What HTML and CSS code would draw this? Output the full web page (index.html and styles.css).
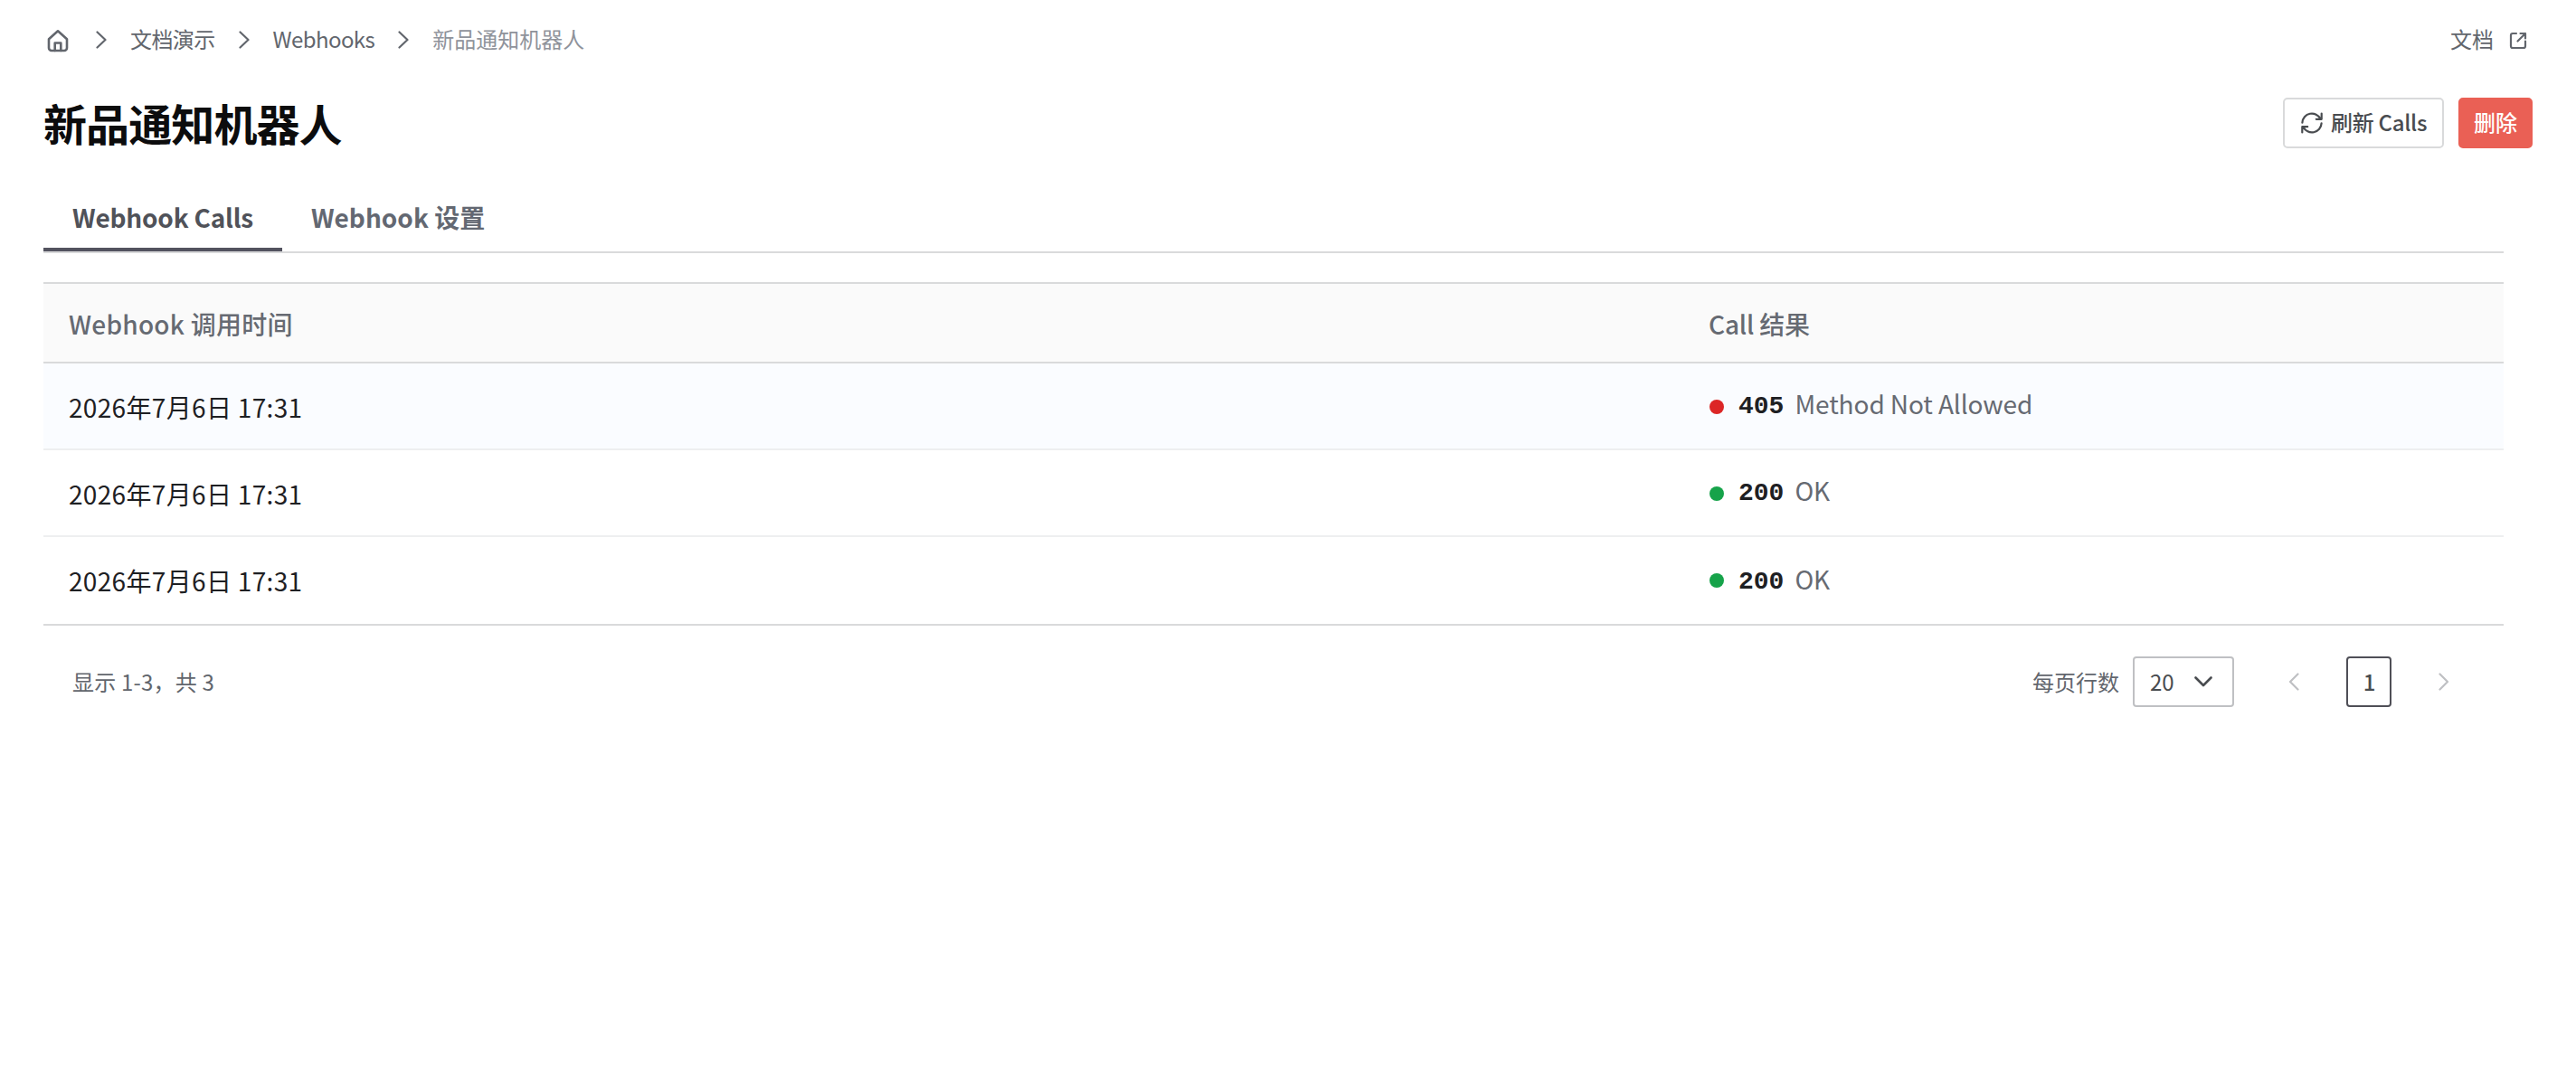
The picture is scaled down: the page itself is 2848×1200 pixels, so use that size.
FILE: index.html
```html
<!DOCTYPE html>
<html lang="zh-CN">
<head>
<meta charset="utf-8">
<title>新品通知机器人</title>
<link rel="stylesheet" href="styles.css">
</head>
<body>
<header class="topbar">
  <nav class="crumbs">
    <svg class="icon home" viewBox="0 0 28 28"><path d="M4 12.300 14 3.300l10 9V22a3 3 0 0 1-3 3H7a3 3 0 0 1-3-3z"/><path d="M10.700 25v-8.500h6.600V25"/></svg>
    <svg class="icon sep" viewBox="0 0 12 20"><path d="M1.500 1.500 10.500 10l-9 8.500"/></svg>
    <a class="crumb">文档演示</a>
    <svg class="icon sep" viewBox="0 0 12 20"><path d="M1.500 1.500 10.500 10l-9 8.500"/></svg>
    <a class="crumb">Webhooks</a>
    <svg class="icon sep" viewBox="0 0 12 20"><path d="M1.500 1.500 10.500 10l-9 8.500"/></svg>
    <span class="crumb current">新品通知机器人</span>
  </nav>
  <a class="docs"><span class="docs-label">文档</span>
    <svg class="icon external" viewBox="0 0 20 20"><path d="M8 2H4a2 2 0 0 0-2 2v12a2 2 0 0 0 2 2h12a2 2 0 0 0 2-2v-5.500"/><path d="M12.500 2H18v5.500M18 2l-8.500 8.500"/></svg>
  </a>
</header>
<div class="heading">
  <h1 class="title">新品通知机器人</h1>
  <div class="actions">
    <button class="btn refresh">
      <svg class="icon reload" viewBox="0 0 24 24"><path d="M1.400 11.600A10.600 10.600 0 0 1 21.500 7.500M22.700 1.500v6.300h-5.900M22.600 12.400A10.600 10.600 0 0 1 2.500 16.500M1.300 22.500v-6.300h5.900"/></svg>
      <span class="btn-label">刷新 Calls</span>
    </button>
    <button class="btn danger"><span class="btn-label">删除</span></button>
  </div>
</div>
<main class="content">
  <div class="tabs">
    <div class="tab active">Webhook Calls</div>
    <div class="tab">Webhook 设置</div>
  </div>
  <div class="table">
    <div class="row head">
      <div class="cell time">Webhook 调用时间</div>
      <div class="cell outcome">Call 结果</div>
    </div>
    <div class="row hover">
      <div class="cell time">2026年7月6日 17:31</div>
      <div class="cell"><i class="dot bad"></i><b class="code">405</b><span class="reason">Method Not Allowed</span></div>
    </div>
    <div class="row">
      <div class="cell time">2026年7月6日 17:31</div>
      <div class="cell"><i class="dot"></i><b class="code">200</b><span class="reason">OK</span></div>
    </div>
    <div class="row last">
      <div class="cell time">2026年7月6日 17:31</div>
      <div class="cell"><i class="dot"></i><b class="code">200</b><span class="reason">OK</span></div>
    </div>
  </div>
  <footer class="pager">
    <span class="summary">显示 1-3，共 3</span>
    <div class="controls">
      <span class="label">每页行数</span>
      <div class="select"><span class="num">20</span><svg class="icon caret" viewBox="0 0 20 12"><path d="M1.500 1.500 10 10l8.500-8.500"/></svg></div>
      <svg class="icon arrow prev" viewBox="0 0 12 20"><path d="M10.500 1.500 2 10l8.500 8.500"/></svg>
      <div class="page"><span class="num">1</span></div>
      <svg class="icon arrow" viewBox="0 0 12 20"><path d="M1.500 1.500 10 10l-8.500 8.500"/></svg>
    </div>
  </footer>
</main>
</body>
</html>
```
FILE: styles.css
```css
* { box-sizing: border-box; }
body {
  margin: 0;
  padding: 0 48px;
  background: #fff;
  color: #1e2023;
  font-family: "Noto Sans CJK SC", sans-serif;
  font-size: 28px;
  line-height: 40px;
}
.icon { display: block; flex: none; fill: none; stroke: currentColor; stroke-width: 2.2; stroke-linecap: round; stroke-linejoin: round; }
.topbar, .crumbs, .docs, .heading, .actions, .btn { display: flex; align-items: center; }

.topbar { height: 88px; justify-content: space-between; font-size: 24px; color: #62666d; }
.home { width: 28px; height: 28px; margin: 2px 2px 0; stroke-width: 2.6; }
.crumb { letter-spacing: -0.6px; padding-bottom: 2px; }
.sep { width: 12px; height: 20px; margin: 0 26px; }
.current { color: #8f939b; letter-spacing: 0; }
.docs { gap: 17px; padding-right: 6px; }
.docs-label { padding-bottom: 2px; }
.external { width: 20px; height: 20px; margin-top: 2px; }

.heading { height: 94px; padding-top: 2px; justify-content: space-between; }
.title { margin: 0; padding-bottom: 3px; font-size: 48px; line-height: 64px; font-weight: 700; letter-spacing: -0.9px; color: #0c0c0d; }
.actions { gap: 16px; }
.btn { height: 56px; padding: 0 18px; border: 2px solid #d9dadb; border-radius: 5px; background: #fff; color: #494c50; font: 500 24px/36px "Noto Sans CJK SC", sans-serif; white-space: nowrap; }
.btn-label { padding-bottom: 2px; }
.refresh { gap: 9px; width: 178px; letter-spacing: -0.3px; }
.reload { width: 24px; height: 24px; }
.danger { width: 82px; padding: 0 15px; background: #ea6055; border-color: #ea6055; color: #fff; }

.content { margin-right: 32px; }
.tabs { display: flex; height: 98px; border-bottom: 2px solid #d9dadb; }
.tab { padding: 38px 32px 0; font-weight: 700; color: #636872; border-bottom: 4px solid transparent; }
.active { border-color: #53535f; color: #505259; letter-spacing: -0.2px; }

.table { margin-top: 32px; border-top: 2px solid #d9dadb; }
.row { display: grid; grid-template-columns: 1814px 1fr; height: 96px; border-bottom: 2px solid #eeeff0; }
.cell { display: flex; align-items: center; padding: 0 28px; }
.time { letter-spacing: 0.33px; padding-top: 2px; }
.outcome { letter-spacing: -0.2px; padding: 2px 27px 0; }
.head { height: 88px; background: #fafafa; border-color: #d9dadb; font-weight: 500; color: #666a72; }
.head .time { letter-spacing: 0.25px; padding-top: 1px; }
.hover { background: #fafcff; }
.dot { width: 16px; height: 16px; margin: 2px 16px 0 0; border-radius: 50%; background: #16a34a; }
.bad { background: #dc2626; }
.code { font-family: "Liberation Mono", monospace; margin-right: 12px; padding-top: 2px; }
.reason { color: #666a72; letter-spacing: -0.1px; padding-bottom: 6px; }
.last { height: 98px; border-color: #d9dadb; }
.last .time { padding-top: 0; }
.last .dot { margin-top: -1px; }
.last .code { padding-top: 4px; }
.last .reason { padding-bottom: 4px; }

.pager { display: flex; justify-content: space-between; align-items: center; height: 124px; padding: 0 32px; font-size: 24px; color: #62666d; }
.summary { letter-spacing: 0.2px; }
.controls { display: flex; align-items: center; }
.label, .num { padding-bottom: 1px; }
.select { display: flex; align-items: center; justify-content: space-between; width: 112px; height: 56px; margin: 0 60px 0 15px; padding: 0 22px 0 17px; border: 2px solid #bfc0c3; border-radius: 4px; color: #494c50; }
.caret { width: 20px; height: 12px; stroke-width: 2.6; }
.arrow { width: 12px; height: 20px; color: #bfc0c3; margin: 0 28px 0 52px; }
.prev { margin: 0 52px 0 0; }
.page { display: flex; align-items: center; justify-content: center; width: 50px; height: 56px; padding-left: 1px; border: 2px solid #4f4f57; border-radius: 4px; color: #494c50; font-weight: 500; }
```
